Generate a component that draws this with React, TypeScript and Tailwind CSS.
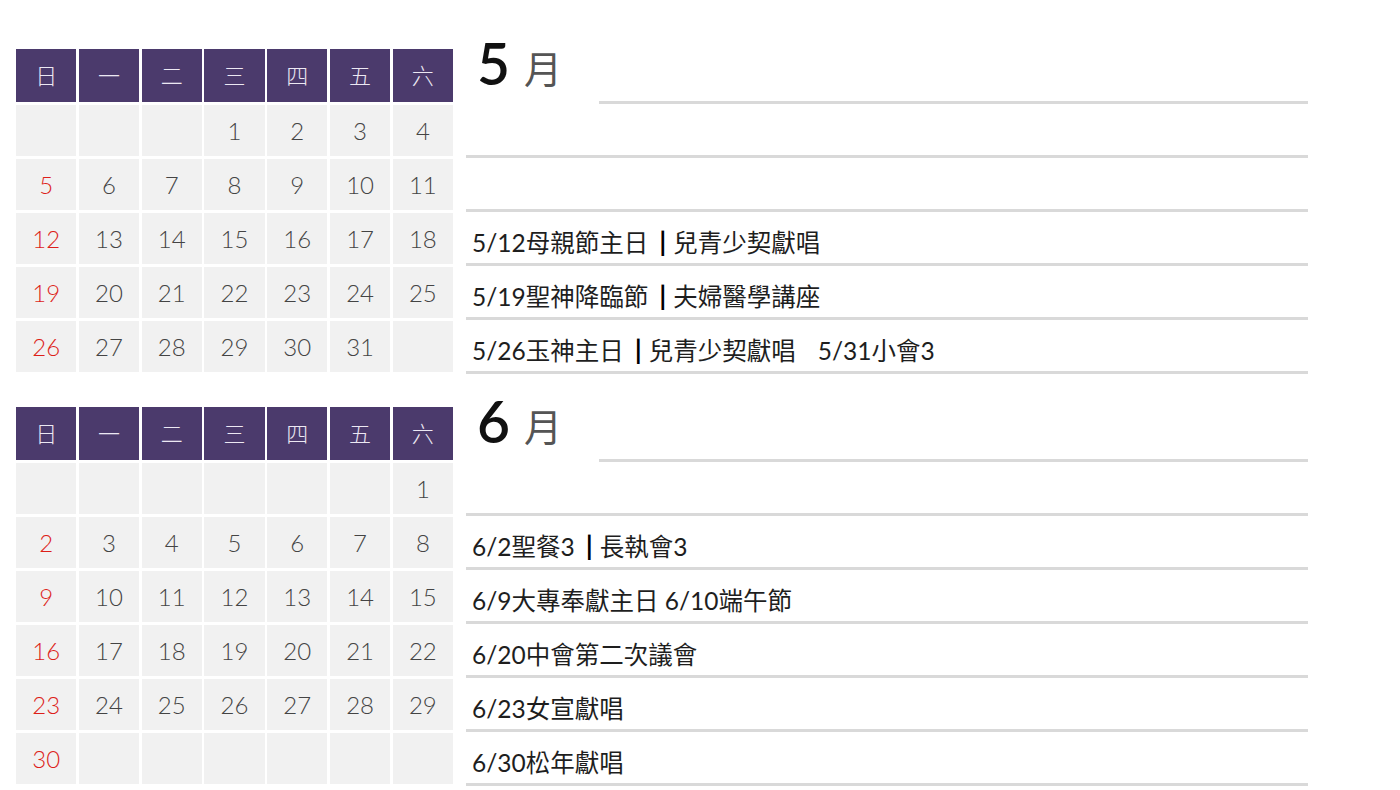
import React from "react";

type Cell = number | null;

const heads = ["日", "一", "二", "三", "四", "五", "六"];

const mayWeeks: Cell[][] = [
  [null, null, null, 1, 2, 3, 4],
  [5, 6, 7, 8, 9, 10, 11],
  [12, 13, 14, 15, 16, 17, 18],
  [19, 20, 21, 22, 23, 24, 25],
  [26, 27, 28, 29, 30, 31, null],
];

const juneWeeks: Cell[][] = [
  [null, null, null, null, null, null, 1],
  [2, 3, 4, 5, 6, 7, 8],
  [9, 10, 11, 12, 13, 14, 15],
  [16, 17, 18, 19, 20, 21, 22],
  [23, 24, 25, 26, 27, 28, 29],
  [30, null, null, null, null, null, null],
];

function Bar() {
  return <span className="font-bold text-black text-[27px] ml-[11px] mr-[7px]">|</span>;
}

function Calendar({ weeks }: { weeks: Cell[][] }) {
  return (
    <div className="w-[437px] shrink-0 grid grid-cols-7 gap-x-[2.5px] gap-y-[3px]">
      {heads.map((h) => (
        <div
          key={h}
          className="h-[53px] bg-[#4b3a6c] flex items-center justify-center text-[22px] font-light text-[#ece8f3]"
        >
          {h}
        </div>
      ))}
      {weeks.flat().map((d, i) => (
        <div
          key={i}
          className={
            "h-[51px] bg-[#f1f1f1] flex items-center justify-center text-[24px] font-light " +
            (i % 7 === 0 ? "text-[#dd1f1a]" : "text-[#444444]")
          }
        >
          {d ?? ""}
        </div>
      ))}
    </div>
  );
}

function Title({ n }: { n: string }) {
  return (
    <div className="h-[54px] flex items-end">
      <div className="w-[133px] h-full flex items-end pl-[11px] pb-[12px] leading-none">
        <span className="text-[57px] font-semibold text-[#111111] leading-none">{n}</span>
        <span className="text-[38px] text-[#555555] ml-[14px] leading-none mb-[5px]">月</span>
      </div>
      <div className="flex-1 h-[3px] bg-[#d9d9d9]" />
    </div>
  );
}

function Row({ children }: { children?: React.ReactNode }) {
  return (
    <div className="h-[54px] border-b-[3px] border-[#d9d9d9] flex items-end pl-[6px] pb-[5px]">
      <div className="text-[24.5px] leading-[30px] text-[#1e1e1e] whitespace-nowrap">{children}</div>
    </div>
  );
}

export default function App() {
  return (
    <div className="w-[1400px] h-[790px] bg-white overflow-hidden font-['Lato','Noto_Sans_CJK_TC',sans-serif]">
      <div className="pt-[49px] pl-[16px] flex flex-col gap-[33px]">
        <div className="flex items-start gap-[13px]">
          <Calendar weeks={mayWeeks} />
          <div className="w-[842px] mt-[1px] flex flex-col">
            <Title n="5" />
            <Row />
            <Row />
            <Row>
              5/12母親節主日<Bar />兒青少契獻唱
            </Row>
            <Row>
              5/19聖神降臨節<Bar />夫婦醫學講座
            </Row>
            <Row>
              5/26玉神主日<Bar />兒青少契獻唱<span className="ml-[22px]">5/31小會3</span>
            </Row>
          </div>
        </div>
        <div className="flex items-start gap-[13px]">
          <Calendar weeks={juneWeeks} />
          <div className="w-[842px] mt-[1px] flex flex-col">
            <Title n="6" />
            <Row />
            <Row>
              6/2聖餐3<Bar />長執會3
            </Row>
            <Row>6/9大專奉獻主日 6/10端午節</Row>
            <Row>6/20中會第二次議會</Row>
            <Row>6/23女宣獻唱</Row>
            <Row>6/30松年獻唱</Row>
          </div>
        </div>
      </div>
    </div>
  );
}
